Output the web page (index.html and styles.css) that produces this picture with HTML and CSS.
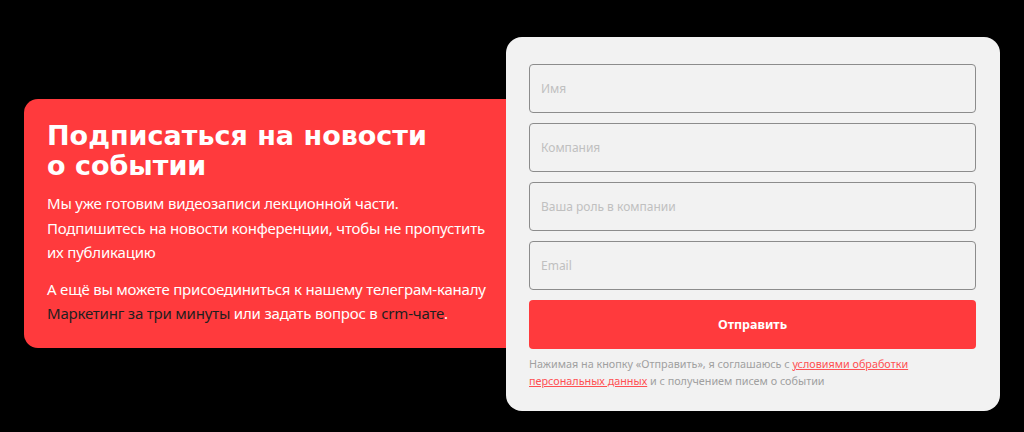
FILE: index.html
```html
<!DOCTYPE html>
<html lang="ru">
<head>
<meta charset="utf-8">
<link rel="stylesheet" href="styles.css">
</head>
<body>
<div class="wrap">
  <section class="promo">
    <h2 class="promo-title">Подписаться на новости<br>о событии</h2>
    <p class="promo-text">Мы уже готовим видеозаписи лекционной части.<br>Подпишитесь на новости конференции, чтобы не пропустить их публикацию</p>
    <p class="promo-text">А ещё вы можете присоединиться к нашему телеграм-каналу <a class="dark-link" href="#">Маркетинг за три минуты</a> или задать вопрос в <a class="dark-link" href="#">crm-чате</a>.</p>
  </section>
  <form class="form">
    <input class="field" type="text" placeholder="Имя">
    <input class="field" type="text" placeholder="Компания">
    <input class="field" type="text" placeholder="Ваша роль в компании">
    <input class="field" type="text" placeholder="Email">
    <button class="submit" type="button">Отправить</button>
    <p class="note">Нажимая на кнопку «Отправить», я соглашаюсь с <a class="note-link" href="#">условиями обработки персональных данных</a> и с получением писем о событии</p>
  </form>
</div>
</body>
</html>
```
FILE: styles.css
```css
* { box-sizing: border-box; }
html, body { margin: 0; padding: 0; background: #000; }
body { width: 1024px; height: 432px; overflow: hidden; font-family: "Noto Sans", "Liberation Sans", sans-serif; }
.wrap { display: flex; align-items: flex-start; padding: 37px 0 0 24px; }
.promo {
  width: 500px;
  height: 249px;
  margin-top: 62px;
  background: #ff3a3d;
  border-radius: 14px;
  padding: 22px 27px 0 23px;
  color: #fff;
}
.promo-title {
  margin: 0 0 10px;
  font-family: "DejaVu Sans", sans-serif;
  font-weight: bold;
  font-size: 27px;
  line-height: 30px;
  letter-spacing: 0;
}
.promo-text {
  margin: 0 0 12px;
  font-size: 15px;
  line-height: 24.5px;
  letter-spacing: -0.2px;
}
.dark-link { color: #1f1f1f; text-decoration: none; }
.form {
  width: 494px;
  height: 374px;
  margin-left: -18px;
  background: #f2f2f2;
  border-radius: 16px;
  padding: 27px 24px 0 23px;
  display: flex;
  flex-direction: column;
  gap: 10px;
}
.field {
  display: block;
  width: 100%;
  height: 49px;
  margin: 0;
  border: 1px solid #8c8c8c;
  border-radius: 4px;
  background: #f2f2f2;
  padding: 0 11px;
  font-family: "Noto Sans", sans-serif;
  font-size: 12px;
  color: #333;
}
.field::placeholder { color: #c0c0c0; }
.submit {
  height: 49px;
  border: 0;
  border-radius: 4px;
  background: #ff3a3d;
  color: #fff;
  font-family: "Noto Sans", sans-serif;
  font-weight: bold;
  font-size: 12.5px;
}
.note {
  margin: -4px 0 0;
  max-width: 385px;
  font-size: 10.8px;
  line-height: 17px;
  color: #a0a0a0;
}
.note-link { color: #ff5053; text-decoration: underline; }
```
